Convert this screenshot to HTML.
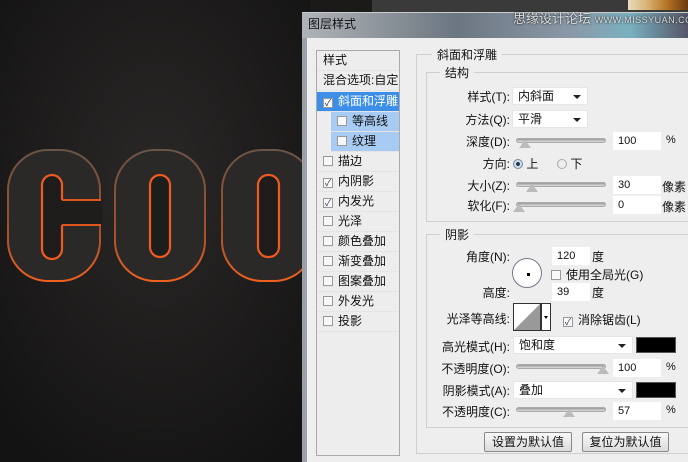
<!DOCTYPE html>
<html><head><meta charset="utf-8"><style>
*{margin:0;padding:0;box-sizing:border-box}
body{width:688px;height:462px;overflow:hidden;position:relative;background:#1b1a19;font-family:"Liberation Sans","Noto Sans CJK SC",sans-serif;font-size:12px;color:#111}
.a{position:absolute;white-space:nowrap}
.lbl{position:absolute;text-align:right;white-space:nowrap}
.dd{position:absolute;background:#fff;border:1px solid #e6e6e6;height:18px;padding:1px 5px;line-height:15px}
.dd:after{content:"";position:absolute;right:6px;top:7px;border:4px solid transparent;border-top:4px solid #222;border-bottom:0}
.sl{position:absolute;height:5px;background:linear-gradient(#999,#ddd);border-radius:3px;border:1px solid #aaa}
.th{position:absolute;top:2px;width:0;height:0;border-left:6px solid transparent;border-right:6px solid transparent;border-bottom:8px solid #bbb}
.in{position:absolute;background:#fff;height:18px;padding:2px 5px;font-size:11px;line-height:14px}
.cb{display:inline-block;width:10px;height:10px;border:1px solid #999;background:#f8f8f8;vertical-align:-1px;margin-right:5px;font-size:9px;line-height:8px;text-align:center;color:#335}
.row{position:absolute;left:0;width:82px;height:20px;line-height:19px;padding-left:6px;border-bottom:1px solid #e4e4e4}
fieldset{position:absolute;border:1px solid #cfcfcf}
.gl{position:absolute;background:#eee;padding:0 5px}
.btn{position:absolute;height:20px;border:1px solid #888;border-radius:2px;background:linear-gradient(#f8f8f8,#dcdcdc);text-align:center;line-height:18px}
</style></head><body>
<svg class="a" style="left:0;top:0" width="310" height="462">
<defs><radialGradient id="g" cx="50%" cy="40%" r="70%"><stop offset="0" stop-color="#2a2827"/><stop offset="1" stop-color="#141313"/></radialGradient>
<linearGradient id="s" x1="0" y1="0" x2="0" y2="1"><stop offset="0" stop-color="#6a5448"/><stop offset="0.6" stop-color="#a0502a"/><stop offset="1" stop-color="#f06020"/></linearGradient></defs>
<rect width="310" height="462" fill="url(#g)"/>
<g fill="#2b2928" stroke="url(#s)" stroke-width="2">
<rect x="8" y="150" width="92" height="131" rx="40"/>
<rect x="115" y="150" width="90" height="131" rx="40"/>
<rect x="222" y="150" width="92" height="131" rx="40"/>
</g>
<g fill="#1e1d1c" stroke="#ee5a20" stroke-width="2.2">
<rect x="42" y="175" width="20" height="84" rx="10"/>
<rect x="150" y="175" width="20" height="82" rx="10"/>
<rect x="258" y="175" width="21" height="82" rx="10"/>
</g>
<path d="M52 200 H102 V225 H52 Z" fill="#1e1d1c"/>
<path d="M62 200 H101 M62 225 H101" stroke="#e0561e" stroke-width="2"/>
</svg>
<div class="a" style="left:372px;top:0;width:316px;height:12px;background:#3a3a3a"></div>
<div class="a" style="left:628px;top:0;width:60px;height:10px;background:linear-gradient(90deg,#e8dcc0,#d8b070,#b07020,#6a3a10)"></div>
<div class="a" style="left:302px;top:12px;width:386px;height:26px;background:linear-gradient(90deg,#b0b4b8,#6c7680 40%,#8a99a8 70%,#7ab0c0 85%,#556);border-top:1px solid #ccc"></div>
<div class="a" style="left:308px;top:15px;color:#111;font-size:12px">图层样式</div>
<div class="a" style="left:513px;top:8px;color:#ddd;font-size:13px;text-shadow:0 0 2px #000">思缘设计论坛 <span style="font-size:9px;letter-spacing:0.5px">WWW.MISSYUAN.COM</span></div>
<div class="a" style="left:302px;top:38px;width:386px;height:424px;background:#eeeeee;border-left:5px solid #9aa0a6"></div>
<div class="a" style="left:316px;top:50px;width:84px;height:406px;background:#ededed;border:1px solid #aaa">
<div class="row" style="top:0">样式</div>
<div class="row" style="top:20px;font-size:12px">混合选项:自定</div>
<div class="row" style="top:41px;background:#3d8ee8;color:#fff"><span class="cb" style="color:#225">✓</span>斜面和浮雕</div>
<div class="row" style="top:61px;left:14px;width:68px;background:#a7cbf2"><span class="cb"></span>等高线</div>
<div class="row" style="top:81px;left:14px;width:68px;background:#a7cbf2"><span class="cb"></span>纹理</div>
<div class="row" style="top:101px"><span class="cb"></span>描边</div>
<div class="row" style="top:121px"><span class="cb">✓</span>内阴影</div>
<div class="row" style="top:141px"><span class="cb">✓</span>内发光</div>
<div class="row" style="top:161px"><span class="cb"></span>光泽</div>
<div class="row" style="top:181px"><span class="cb"></span>颜色叠加</div>
<div class="row" style="top:201px"><span class="cb"></span>渐变叠加</div>
<div class="row" style="top:221px"><span class="cb"></span>图案叠加</div>
<div class="row" style="top:241px"><span class="cb"></span>外发光</div>
<div class="row" style="top:261px"><span class="cb"></span>投影</div>
</div>
<fieldset style="left:416px;top:54px;width:280px;height:400px"></fieldset>
<div class="gl" style="left:432px;top:46px">斜面和浮雕</div>
<fieldset style="left:426px;top:72px;width:270px;height:150px"></fieldset>
<div class="gl" style="left:440px;top:64px">结构</div>
<div class="lbl" style="right:178px;top:88px">样式(T):</div><div class="dd" style="left:512px;top:87px;width:76px">内斜面</div>
<div class="lbl" style="right:178px;top:111px">方法(Q):</div><div class="dd" style="left:512px;top:110px;width:76px">平滑</div>
<div class="lbl" style="right:178px;top:133px">深度(D):</div><div class="sl" style="left:516px;top:138px;width:90px"></div><div class="th" style="left:519px;top:140px"></div><div class="in" style="left:613px;top:132px;width:48px">100</div><div class="a" style="left:666px;top:134px;font-size:11px">%</div>
<div class="lbl" style="right:178px;top:155px">方向:</div>
<div class="a" style="left:513px;top:155px"><span style="display:inline-block;width:10px;height:10px;border-radius:50%;border:1px solid #789;background:radial-gradient(#234 30%,#cde 40%);vertical-align:-1px"></span> 上</div>
<div class="a" style="left:557px;top:155px"><span style="display:inline-block;width:10px;height:10px;border-radius:50%;border:1px solid #aaa;background:#eee;vertical-align:-1px"></span> 下</div>
<div class="lbl" style="right:178px;top:177px">大小(Z):</div><div class="sl" style="left:516px;top:182px;width:90px"></div><div class="th" style="left:526px;top:184px"></div><div class="in" style="left:613px;top:176px;width:48px">30</div><div class="a" style="left:662px;top:178px">像素</div>
<div class="lbl" style="right:178px;top:197px">软化(F):</div><div class="sl" style="left:516px;top:202px;width:90px"></div><div class="th" style="left:513px;top:204px"></div><div class="in" style="left:613px;top:196px;width:48px">0</div><div class="a" style="left:662px;top:198px">像素</div>
<fieldset style="left:426px;top:234px;width:270px;height:194px"></fieldset>
<div class="gl" style="left:440px;top:226px">阴影</div>
<div class="lbl" style="right:178px;top:248px">角度(N):</div><div class="in" style="left:552px;top:247px;width:38px">120</div><div class="a" style="left:592px;top:248px">度</div>
<div class="a" style="left:512px;top:258px;width:30px;height:30px;border-radius:50%;border:1px solid #778;background:#fff"></div>
<div class="a" style="left:527px;top:273px;width:3px;height:3px;background:#000"></div>
<div class="a" style="left:551px;top:266px"><span class="cb"></span>使用全局光(G)</div>
<div class="lbl" style="right:178px;top:284px">高度:</div><div class="in" style="left:552px;top:283px;width:38px">39</div><div class="a" style="left:592px;top:284px">度</div>
<div class="lbl" style="right:178px;top:310px">光泽等高线:</div>
<svg class="a" style="left:513px;top:303px" width="38" height="28"><rect x="0.5" y="0.5" width="27" height="27" fill="#fff" stroke="#333"/><path d="M1 27L27 1V27Z" fill="#999"/><rect x="28.5" y="0.5" width="9" height="27" fill="#fff" stroke="#333"/><path d="M31 13h4l-2 3z" fill="#000"/></svg>
<div class="a" style="left:563px;top:311px"><span class="cb">✓</span>消除锯齿(L)</div>
<div class="lbl" style="right:178px;top:338px">高光模式(H):</div><div class="dd" style="left:513px;top:336px;width:120px">饱和度</div><div class="a" style="left:636px;top:337px;width:40px;height:16px;background:#000;border:1px solid #555"></div>
<div class="lbl" style="right:178px;top:360px">不透明度(O):</div><div class="sl" style="left:516px;top:364px;width:90px"></div><div class="th" style="left:597px;top:366px"></div><div class="in" style="left:613px;top:359px;width:48px">100</div><div class="a" style="left:666px;top:361px;font-size:11px">%</div>
<div class="lbl" style="right:178px;top:382px">阴影模式(A):</div><div class="dd" style="left:513px;top:381px;width:120px">叠加</div><div class="a" style="left:636px;top:382px;width:40px;height:16px;background:#000;border:1px solid #555"></div>
<div class="lbl" style="right:178px;top:403px">不透明度(C):</div><div class="sl" style="left:516px;top:407px;width:90px"></div><div class="th" style="left:563px;top:409px"></div><div class="in" style="left:613px;top:402px;width:48px">57</div><div class="a" style="left:666px;top:404px;font-size:11px">%</div>
<div class="btn" style="left:484px;top:432px;width:88px">设置为默认值</div>
<div class="btn" style="left:582px;top:432px;width:87px">复位为默认值</div>
</body></html>
